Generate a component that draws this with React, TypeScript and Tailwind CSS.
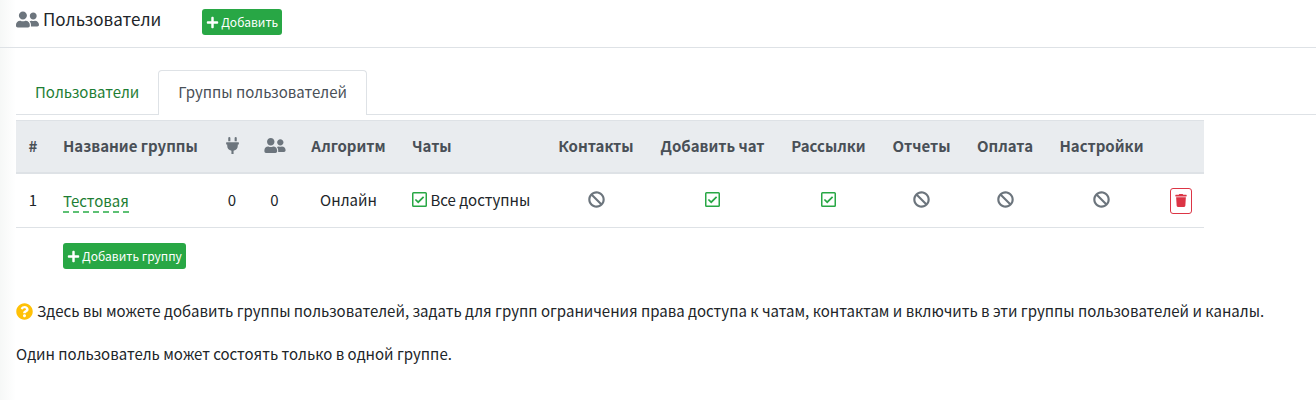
import React from 'react';
import { FaBan, FaPlug, FaPlus, FaQuestionCircle, FaTrash, FaUserFriends } from 'react-icons/fa';

interface Column {
  key: string;
  title: React.ReactNode;
  width: string;
  align?: string;
}

interface Group {
  id: number;
  name: string;
  channels: number;
  users: number;
  algorithm: string;
  chats: string;
  rights: boolean[];
}

const columns: Column[] = [
  { key: 'id', title: '#', width: 'w-[34px]' },
  { key: 'name', title: 'Название группы', width: 'w-[163px]', align: 'text-left' },
  { key: 'channels', title: <FaPlug className="inline-block h-[17px] w-[13px] align-[-2px] text-[#6c757d]" aria-label="Каналы" />, width: 'w-[38px]' },
  { key: 'users', title: <FaUserFriends className="inline-block h-[17px] w-[22px] align-[-2px] text-[#6c757d]" aria-label="Пользователи" />, width: 'w-[47px]' },
  { key: 'algorithm', title: 'Алгоритм', width: 'w-[101px]' },
  { key: 'chats', title: 'Чаты', width: 'w-[146px]', align: 'text-left' },
  { key: 'contacts', title: 'Контакты', width: 'w-[102px]' },
  { key: 'addChat', title: 'Добавить чат', width: 'w-[131px]' },
  { key: 'mailings', title: 'Рассылки', width: 'w-[101px]' },
  { key: 'reports', title: 'Отчеты', width: 'w-[85px]' },
  { key: 'payment', title: 'Оплата', width: 'w-[82px]' },
  { key: 'settings', title: 'Настройки', width: 'w-[111px]' },
  { key: 'actions', title: '', width: 'w-[47px]' },
];

const groups: Group[] = [
  {
    id: 1,
    name: 'Тестовая',
    channels: 0,
    users: 0,
    algorithm: 'Онлайн',
    chats: 'Все доступны',
    rights: [false, true, true, false, false, false],
  },
];

const AddButton: React.FC<{ children: React.ReactNode }> = ({ children }) => (
  <button type="button" className="flex h-[26px] items-center gap-0.5 rounded-[3px] bg-[#28a745] px-1 text-[12px] whitespace-nowrap text-white hover:bg-[#218838]">
    <FaPlus className="h-[13px] w-[13px]" />
    {children}
  </button>
);

const Allowed = () => (
  <svg viewBox="0 0 15 15" className="inline-block h-[15px] w-[15px] align-[-1px] text-[#28a745]" fill="none" stroke="currentColor" role="img" aria-label="Да">
    <rect x="0.75" y="0.75" width="13.5" height="13.5" rx="0.8" strokeWidth="1.5" />
    <path d="M3.4 7.5 6.2 10.2 11.6 4.9" strokeWidth="1.7" />
  </svg>
);

const Denied = () => <FaBan className="inline-block h-[17px] w-[17px] align-[-2px] text-[#6c757d]" aria-label="Нет" />;

const App: React.FC = () => {
  return (
    <div className="min-h-screen bg-white bg-linear-to-r from-[#f6f8f7] to-white to-[16px] font-['Noto_Sans_CJK_SC','Noto_Sans',sans-serif] text-[15px] leading-6 text-[#212529]">
      <header className="flex h-12 items-start border-b border-[#dee2e6] px-4 pt-[7px]">
        <h1 className="flex items-center gap-1 pr-[41px] text-[17px]">
          <FaUserFriends className="h-[19px] w-[23px] text-[#6c757d]" />
          Пользователи
        </h1>
        <div className="pt-[2px]">
          <AddButton>Добавить</AddButton>
        </div>
      </header>

      <main className="pt-[22px] pl-4">
        <nav className="flex border-b border-[#dee2e6]">
          <a href="#users" className="px-[19px] py-[10px] text-[#1e7e34]">Пользователи</a>
          <a href="#groups" aria-current="page" className="-mb-px rounded-t-[4px] border border-b-0 border-[#dee2e6] bg-white px-[19px] pt-[9px] pb-[11px] text-[#495057]">
            Группы пользователей
          </a>
        </nav>

        <table className="mt-[5px] w-[1188px] table-fixed border-separate border-spacing-0 text-center">
          <thead>
            <tr className="h-[54px] bg-[#e9ecef] text-[#495057]">
              {columns.map(col => (
                <th key={col.key} scope="col" className={`${col.width} ${col.align ?? 'text-center'} ${col.align ? 'pl-[13px]' : ''} border-t border-b-2 border-[#dee2e6] pb-0.5 font-bold whitespace-nowrap`}>
                  {col.title}
                </th>
              ))}
            </tr>
          </thead>
          <tbody className="[&_td]:border-b [&_td]:border-[#dee2e6]">
            {groups.map(group => (
              <tr key={group.id} className="h-[54px]">
                <td className="pb-0.5">{group.id}</td>
                <td className="pl-[13px] text-left">
                  <a href="#group" className="inline-block border-b-2 border-dashed border-[#5cc073] leading-5 text-[#1e7e34]">{group.name}</a>
                </td>
                <td className="pb-0.5">{group.channels}</td>
                <td className="pb-0.5">{group.users}</td>
                <td className="pb-0.5">{group.algorithm}</td>
                <td className="pb-0.5 pl-[13px] text-left whitespace-nowrap"><Allowed /> {group.chats}</td>
                {group.rights.map((allowed, i) => (
                  <td key={i} className="pb-0.5">{allowed ? <Allowed /> : <Denied />}</td>
                ))}
                <td>
                  <button type="button" aria-label="Удалить" className="inline-flex h-[26px] w-[22px] items-center justify-center rounded-[3px] border border-[#dc3545] align-middle text-[#dc3545]">
                    <FaTrash className="h-[13px] w-[12px]" />
                  </button>
                </td>
              </tr>
            ))}
          </tbody>
        </table>

        <div className="mt-[15px] pl-[47px]">
          <AddButton>Добавить группу</AddButton>
        </div>

        <p className="mt-[30px] flex items-center gap-1">
          <FaQuestionCircle className="h-[17px] w-[17px] shrink-0 text-[#ffc107]" />
          Здесь вы можете добавить группы пользователей, задать для групп ограничения права доступа к чатам, контактам и включить в эти группы пользователей и каналы.
        </p>
        <p className="mt-[19px]">Один пользователь может состоять только в одной группе.</p>
      </main>
    </div>
  );
};

export default App;
